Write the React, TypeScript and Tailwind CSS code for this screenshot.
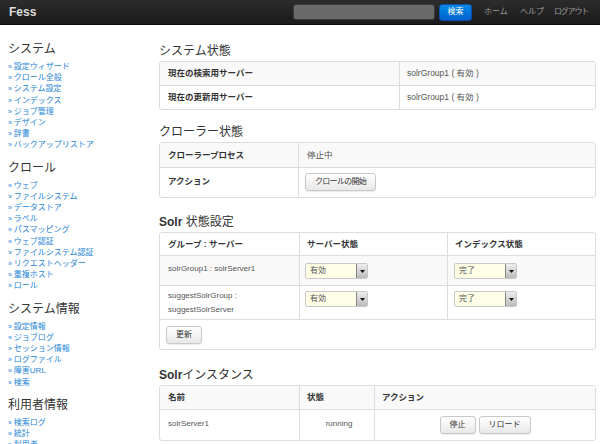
import type { ReactNode } from 'react';

const FONT = '"Liberation Sans", "Noto Sans CJK JP", sans-serif';

const SIDEBAR = [
  {
    title: 'システム',
    links: ['設定ウィザード', 'クロール全般', 'システム設定', 'インデックス', 'ジョブ管理', 'デザイン', '辞書', 'バックアップリストア'],
  },
  {
    title: 'クロール',
    links: ['ウェブ', 'ファイルシステム', 'データストア', 'ラベル', 'パスマッピング', 'ウェブ認証', 'ファイルシステム認証', 'リクエストヘッダー', '重複ホスト', 'ロール'],
  },
  {
    title: 'システム情報',
    links: ['設定情報', 'ジョブログ', 'セッション情報', 'ログファイル', '障害URL', '検索'],
  },
  {
    title: '利用者情報',
    links: ['検索ログ', '統計', '利用者'],
  },
];

function Btn({ children, tight }: { children: ReactNode; tight?: boolean }) {
  return (
    <button
      className={`h-[18px] px-[9px] rounded-[3px] border border-[#c8c8c8] bg-gradient-to-b from-white to-[#e8e8e8] text-[8px] leading-none text-[#333] shadow-[0_1px_1px_rgba(0,0,0,0.08)] ${
        tight ? 'tracking-[-0.7px]' : ''
      }`}
    >
      {children}
    </button>
  );
}

function Select({ value }: { value: string }) {
  return (
    <div className="flex h-[16px] w-[63px] rounded-[2px] border border-[#c8c8c8] bg-[#ffffe8] overflow-hidden">
      <span className="flex-1 pl-[4px] pt-[2px] text-[8px] leading-[10px] text-[#555]">{value}</span>
      <span className="flex w-[11px] items-center justify-center border-l border-[#888] bg-gradient-to-b from-[#eee] to-[#bbb]">
        <svg width="5" height="3" viewBox="0 0 5 3">
          <path d="M0 0h5L2.5 3z" fill="#111" />
        </svg>
      </span>
    </div>
  );
}

function Heading({ children }: { children: ReactNode }) {
  return <h2 className="text-[12px] leading-[18px] text-[#333] mb-[1px]">{children}</h2>;
}

function Table({ children }: { children: ReactNode }) {
  return <div className="border border-[#ddd] rounded-[3px] overflow-hidden">{children}</div>;
}

export default function App() {
  return (
    <div className="w-[600px] h-[444px] overflow-hidden bg-white" style={{ fontFamily: FONT }}>
      {/* top bar */}
      <div className="flex h-[25px] items-center bg-gradient-to-b from-[#2c2c2c] to-[#1b1b1b] border-b border-[#0c0c0c]">
        <span className="pl-[9px] text-[12px] font-bold text-[#ddd]">Fess</span>
        <div className="ml-auto flex items-center">
          <div className="h-[16px] w-[142px] rounded-[3px] border border-[#3a3a3a] bg-[#6a6a6a]" />
          <button className="ml-[4px] h-[17px] w-[33px] rounded-[3px] border border-[#0a4fa8] bg-gradient-to-b from-[#0a8ae6] to-[#0060d0] text-[8px] text-white">
            検索
          </button>
          <div className="flex pl-[12px] pr-[12px] text-[8px] text-[#9a9a9a]">
            <span className="w-[36px]">ホーム</span>
            <span className="w-[34px]">ヘルプ</span>
            <span className="tracking-[-1.2px]">ログアウト</span>
          </div>
        </div>
      </div>

      <div className="flex">
        {/* sidebar */}
        <div className="w-[159px] shrink-0 pl-[8px] pt-[16px]">
          {SIDEBAR.map((sec) => (
            <div key={sec.title} className="mb-[9px]">
              <div className="text-[12px] leading-[16px] text-[#333] mb-[4px]">{sec.title}</div>
              {sec.links.map((l) => (
                <div key={l} className="text-[8px] leading-[11.2px] text-[#2585d8]">
                  <span className="text-[7px]">» </span>
                  {l}
                </div>
              ))}
            </div>
          ))}
        </div>

        {/* main */}
        <div className="flex-1 pr-[4px] pt-[17px] text-[8.5px] text-[#555]">
          <Heading>システム状態</Heading>
          <Table>
            <div className="grid grid-cols-[239px_1fr] h-[23px] bg-[#f9f9f9]">
              <div className="px-[8px] flex items-center font-bold text-[#333]">現在の検索用サーバー</div>
              <div className="px-[7px] flex items-center border-l border-[#ddd]">solrGroup1 ( 有効 )</div>
            </div>
            <div className="grid grid-cols-[239px_1fr] h-[24px] border-t border-[#ddd]">
              <div className="px-[8px] flex items-center font-bold text-[#333]">現在の更新用サーバー</div>
              <div className="px-[7px] flex items-center border-l border-[#ddd]">solrGroup1 ( 有効 )</div>
            </div>
          </Table>

          <div className="mt-[13px]">
            <Heading>クローラー状態</Heading>
            <Table>
              <div className="grid grid-cols-[138px_1fr] h-[24px] bg-[#f9f9f9]">
                <div className="px-[8px] flex items-center font-bold text-[#333]">クローラープロセス</div>
                <div className="px-[8px] flex items-center border-l border-[#ddd]">停止中</div>
              </div>
              <div className="grid grid-cols-[138px_1fr] h-[30px] border-t border-[#ddd]">
                <div className="px-[8px] pt-[7px] font-bold text-[#333]">アクション</div>
                <div className="px-[6px] pt-[5px] border-l border-[#ddd]">
                  <Btn tight>クロールの開始</Btn>
                </div>
              </div>
            </Table>
          </div>

          <div className="mt-[15px]">
            <Heading>
              <span className="font-bold">Solr</span> 状態設定
            </Heading>
            <Table>
              <div className="grid grid-cols-[139px_148px_1fr] h-[22px] font-bold text-[#333]">
                <div className="px-[8px] flex items-center">グループ : サーバー</div>
                <div className="px-[7px] flex items-center border-l border-[#ddd]">サーバー状態</div>
                <div className="px-[7px] flex items-center border-l border-[#ddd]">インデックス状態</div>
              </div>
              <div className="grid grid-cols-[139px_148px_1fr] h-[30px] border-t border-[#ddd] bg-[#f9f9f9]">
                <div className="px-[8px] pt-[7px] leading-[11px] text-[8px]">solrGroup1 : solrServer1</div>
                <div className="px-[5px] pt-[7px] border-l border-[#ddd]">
                  <Select value="有効" />
                </div>
                <div className="px-[6px] pt-[7px] border-l border-[#ddd]">
                  <Select value="完了" />
                </div>
              </div>
              <div className="grid grid-cols-[139px_148px_1fr] h-[34px] border-t border-[#ddd]">
                <div className="px-[8px] pt-[3px] leading-[14px] text-[8px]">
                  suggestSolrGroup :<br />
                  suggestSolrServer
                </div>
                <div className="px-[5px] pt-[5px] border-l border-[#ddd]">
                  <Select value="有効" />
                </div>
                <div className="px-[6px] pt-[5px] border-l border-[#ddd]">
                  <Select value="完了" />
                </div>
              </div>
              <div className="h-[30px] border-t border-[#ddd] px-[6px] pt-[6px]">
                <Btn>更新</Btn>
              </div>
            </Table>
          </div>

          <div className="mt-[16px]">
            <Heading>
              <span className="font-bold">Solr</span>インスタンス
            </Heading>
            <Table>
              <div className="grid grid-cols-[139px_75px_1fr] h-[23px] bg-[#f9f9f9] font-bold text-[#333]">
                <div className="px-[8px] flex items-center">名前</div>
                <div className="px-[7px] flex items-center border-l border-[#ddd]">状態</div>
                <div className="px-[7px] flex items-center border-l border-[#ddd]">アクション</div>
              </div>
              <div className="grid grid-cols-[139px_75px_1fr] h-[31px] border-t border-[#ddd]">
                <div className="px-[8px] pt-[8px] text-[8px]">solrServer1</div>
                <div className="pt-[8px] pl-[4px] text-center text-[8px] border-l border-[#ddd]">running</div>
                <div className="flex justify-center gap-[3px] pt-[6px] border-l border-[#ddd]">
                  <Btn>停止</Btn>
                  <Btn>リロード</Btn>
                </div>
              </div>
            </Table>
          </div>
        </div>
      </div>
    </div>
  );
}
